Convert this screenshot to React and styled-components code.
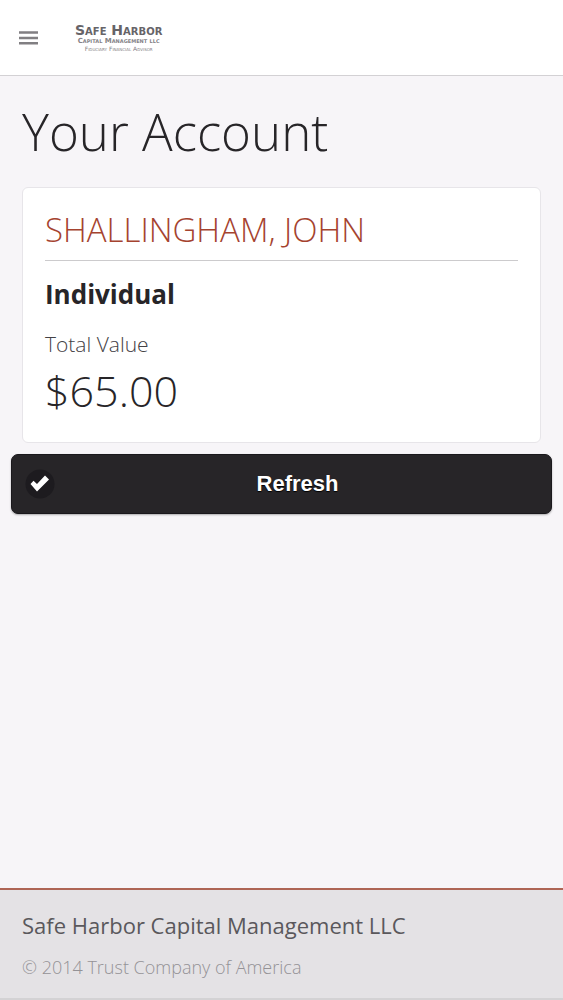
import React from 'react';
import styled, { createGlobalStyle } from 'styled-components';

const GlobalStyle = createGlobalStyle`
  :root {
    --dark-color: #272528;
    --accent-color: #a5432f;
    --page-color: #f7f5f8;
  }

  * {
    box-sizing: border-box;
  }

  body {
    background: var(--page-color);
    color: var(--dark-color);
    font-family: 'Open Sans', sans-serif;
    margin: 0;
  }

  h1, h2, h3, p, dl, dd {
    margin: 0;
  }
`;

const Page = styled.div`
  display: flex;
  flex-direction: column;
  min-height: 100vh;
`;

const Header = styled.header`
  align-items: center;
  background: #fff;
  border-bottom: 1px solid #d3d1d4;
  display: flex;
  gap: 36px;
  height: 76px;
  padding: 0 18px;
`;

const MenuButton = styled.button`
  background: none;
  border: 0;
  cursor: pointer;
  display: flex;
  padding: 0;
`;

const Logo = styled.a`
  color: #666468;
  display: flex;
  flex-direction: column;
  font-family: 'DejaVu Sans', sans-serif;
  font-variant: small-caps;
  text-align: center;
  text-decoration: none;
  white-space: nowrap;
`;

const LogoName = styled.span`
  font-size: 14px;
  font-weight: 700;
  line-height: 14px;
`;

const LogoLine = styled.span`
  color: ${(props) => (props.$faint ? '#828084' : '#848286')};
  font-size: ${(props) => (props.$faint ? 6 : 7)}px;
  font-weight: ${(props) => (props.$faint ? 400 : 700)};
  line-height: 8px;
`;

const Main = styled.main`
  flex: 1;
  padding: 0 11px 22px;
`;

const Title = styled.h1`
  font-size: 51px;
  font-weight: 300;
  line-height: 72px;
  padding: 19px 11px 20px;
`;

const Card = styled.section`
  background: #fff;
  border: 1px solid #e7e5e9;
  border-radius: 6px;
  margin: 0 11px 11px;
  padding: 20px 22px;
`;

const ClientName = styled.h2`
  border-bottom: 1px solid #cccbcd;
  color: var(--accent-color);
  font-size: 33px;
  font-weight: 300;
  line-height: 44px;
  margin-bottom: 15px;
  padding-bottom: 8px;
  text-transform: uppercase;
`;

const AccountType = styled.h3`
  font-size: 26px;
  font-weight: 700;
  line-height: 36px;
  margin-bottom: 17px;
`;

const Label = styled.dt`
  color: #434145;
  font-size: 21px;
  font-weight: 300;
  line-height: 30px;
`;

const Amount = styled.dd`
  font-size: 43px;
  font-weight: 300;
  line-height: 63px;
`;

const RefreshButton = styled.button`
  align-items: center;
  background: var(--dark-color);
  border: 1px solid #1a181c;
  border-radius: 7px;
  box-shadow: 0 1px 2px rgba(0, 0, 0, 0.3);
  color: #fff;
  cursor: pointer;
  display: grid;
  font-family: 'Liberation Sans', sans-serif;
  font-size: 22px;
  font-weight: 700;
  grid-template-columns: 32px 1fr;
  height: 60px;
  padding: 0 12px;
  text-shadow: 0 1px 1px #000;
  width: 100%;
`;

const Footer = styled.footer`
  background: #e4e2e5;
  border-bottom: 2px solid #d3d2d4;
  border-top: 2px solid #ae6555;
  padding: 20px 22px 18px;
`;

const Company = styled.p`
  color: #5a585c;
  font-size: 22px;
  line-height: 30px;
  margin-bottom: 14px;
`;

const Copyright = styled.p`
  color: #949296;
  font-size: 18px;
  font-weight: 300;
  line-height: 26px;
`;

const MenuIcon = () => (
  <svg width="21" height="16" viewBox="0 0 21 16" stroke="#817f82" strokeWidth="2.6" aria-hidden="true">
    <path d="M1 2.5h19M1 8h19M1 13.3h19" />
  </svg>
);

const CheckIcon = () => (
  <svg width="32" height="32" viewBox="0 0 32 32" aria-hidden="true">
    <circle cx="16" cy="16" r="14.5" fill="#1d1b1f" />
    <path d="M6.5 16L9.5 12.8L13 16L21 7.5L25 11.5L13 23.5Z" fill="#fff" />
  </svg>
);

export default function App() {
  const account = {
    name: 'Shallingham, John',
    type: 'Individual',
    total: '$65.00',
  };

  return (
    <>
      <GlobalStyle />
      <Page>
        <Header>
          <MenuButton type="button" aria-label="Menu">
            <MenuIcon />
          </MenuButton>
          <Logo href="#">
            <LogoName>Safe Harbor</LogoName>
            <LogoLine>Capital Management llc</LogoLine>
            <LogoLine $faint>Fiduciary Financial Advisor</LogoLine>
          </Logo>
        </Header>
        <Main>
          <Title>Your Account</Title>
          <Card>
            <ClientName>{account.name}</ClientName>
            <AccountType>{account.type}</AccountType>
            <dl>
              <Label>Total Value</Label>
              <Amount>{account.total}</Amount>
            </dl>
          </Card>
          <RefreshButton type="button">
            <CheckIcon />
            <span>Refresh</span>
          </RefreshButton>
        </Main>
        <Footer>
          <Company>Safe Harbor Capital Management LLC</Company>
          <Copyright>© 2014 Trust Company of America</Copyright>
        </Footer>
      </Page>
    </>
  );
}
